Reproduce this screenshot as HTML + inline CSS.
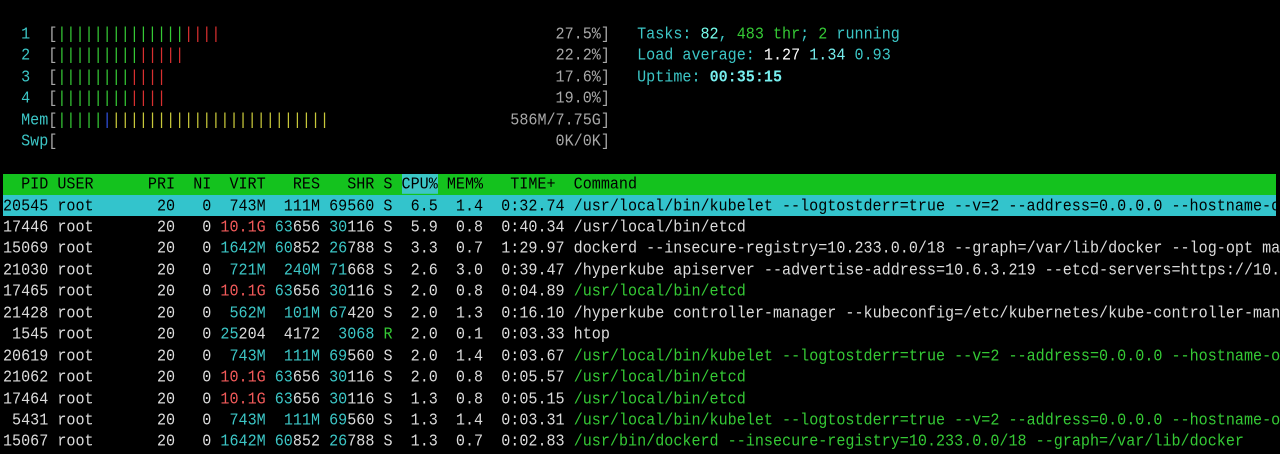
<!DOCTYPE html>
<html><head><meta charset="utf-8"><style>
html,body{margin:0;padding:0;background:#000;width:1280px;height:436px;overflow:hidden}
.l{position:absolute;left:3px;white-space:pre;font-family:"Liberation Mono",monospace;font-size:15.1px;line-height:21.45px;height:21.45px;color:#dcdcdc;transform:scaleY(1.1);transform-origin:0 50%}
.c{color:#3cc6c6}.g{color:#35c935}.r{color:#f25a5a}.y{color:#c8c83a}.b{color:#3050e0}.gr{color:#a8a8a8}.wb{color:#fff}.rd{color:#d83030}
.bar{position:absolute;left:3px;width:1273px;height:21px}
.hd{color:#000}
.sel,.sel span{color:#000}
.srt{background:#3cc6c6}
</style></head><body>
<div class="bar" style="top:174px;background:#14c21e"></div>
<div class="bar" style="top:195px;background:#33c4cc"></div>
<div class="l" style="top:23.8px"><span class="c">  1  </span><span class="gr">[</span><span class="g">||||||||||||||</span><span class="rd">||||</span>                                     <span class="gr">27.5%]</span>   <span class="c">Tasks: </span><span class="wb" style="color:#7fe">82</span><span class="c">, </span><span class="g">483</span><span class="g"> thr</span><span class="c">; </span><span class="g">2</span><span class="c"> running</span></div>
<div class="l" style="top:45.3px"><span class="c">  2  </span><span class="gr">[</span><span class="g">|||||||||</span><span class="rd">|||||</span>                                         <span class="gr">22.2%]</span>   <span class="c">Load average: </span><span class="wb">1.27 </span><span style="color:#7ee">1.34 </span><span class="c">0.93</span></div>
<div class="l" style="top:66.8px"><span class="c">  3  </span><span class="gr">[</span><span class="g">||||||||</span><span class="rd">||||</span>                                           <span class="gr">17.6%]</span>   <span class="c">Uptime: </span><span style="color:#7ee;font-weight:bold">00:35:15</span></div>
<div class="l" style="top:88.2px"><span class="c">  4  </span><span class="gr">[</span><span class="g">||||||||</span><span class="rd">||||</span>                                           <span class="gr">19.0%]</span></div>
<div class="l" style="top:109.6px"><span class="c">  Mem</span><span class="gr">[</span><span class="g">|||||</span><span class="b">|</span><span class="y">||||||||||||||||||||||||</span>                    <span class="gr">586M/7.75G]</span></div>
<div class="l" style="top:131.1px"><span class="c">  Swp</span><span class="gr">[</span>                                                       <span class="gr">0K/0K]</span></div>
<div class="l hd" style="top:174px">  PID USER      PRI  NI  VIRT   RES   SHR S <span class="srt">CPU%</span> MEM%   TIME+  Command</div>
<div class="l sel" style="top:195.5px">20545 root       20   0  743M  111M 69560 S  6.5  1.4  0:32.74 /usr/local/bin/kubelet --logtostderr=true --v=2 --address=0.0.0.0 --hostname-o</div>
<div class="l" style="top:216.9px">17446 root       20   0 <span class="r">10.1G</span> <span class="c">63</span>656 <span class="c">30</span>116 S  5.9  0.8  0:40.34 /usr/local/bin/etcd</div>
<div class="l" style="top:238.4px">15069 root       20   0 <span class="c">1642M</span> <span class="c">60</span>852 <span class="c">26</span>788 S  3.3  0.7  1:29.97 dockerd --insecure-registry=10.233.0.0/18 --graph=/var/lib/docker --log-opt ma</div>
<div class="l" style="top:259.8px">21030 root       20   0  <span class="c">721M</span>  <span class="c">240M</span> <span class="c">71</span>668 S  2.6  3.0  0:39.47 /hyperkube apiserver --advertise-address=10.6.3.219 --etcd-servers=https://10.</div>
<div class="l" style="top:281.3px">17465 root       20   0 <span class="r">10.1G</span> <span class="c">63</span>656 <span class="c">30</span>116 S  2.0  0.8  0:04.89 <span class="g">/usr/local/bin/etcd</span></div>
<div class="l" style="top:302.7px">21428 root       20   0  <span class="c">562M</span>  <span class="c">101M</span> <span class="c">67</span>420 S  2.0  1.3  0:16.10 /hyperkube controller-manager --kubeconfig=/etc/kubernetes/kube-controller-man</div>
<div class="l" style="top:324.2px"> 1545 root       20   0 <span class="c">25</span>204  4172  <span class="c">3068</span> <span class="g">R</span>  2.0  0.1  0:03.33 htop</div>
<div class="l" style="top:345.6px">20619 root       20   0  <span class="c">743M</span>  <span class="c">111M</span> <span class="c">69</span>560 S  2.0  1.4  0:03.67 <span class="g">/usr/local/bin/kubelet --logtostderr=true --v=2 --address=0.0.0.0 --hostname-o</span></div>
<div class="l" style="top:367.1px">21062 root       20   0 <span class="r">10.1G</span> <span class="c">63</span>656 <span class="c">30</span>116 S  2.0  0.8  0:05.57 <span class="g">/usr/local/bin/etcd</span></div>
<div class="l" style="top:388.5px">17464 root       20   0 <span class="r">10.1G</span> <span class="c">63</span>656 <span class="c">30</span>116 S  1.3  0.8  0:05.15 <span class="g">/usr/local/bin/etcd</span></div>
<div class="l" style="top:410px"> 5431 root       20   0  <span class="c">743M</span>  <span class="c">111M</span> <span class="c">69</span>560 S  1.3  1.4  0:03.31 <span class="g">/usr/local/bin/kubelet --logtostderr=true --v=2 --address=0.0.0.0 --hostname-o</span></div>
<div class="l" style="top:431.4px">15067 root       20   0 <span class="c">1642M</span> <span class="c">60</span>852 <span class="c">26</span>788 S  1.3  0.7  0:02.83 <span class="g">/usr/bin/dockerd --insecure-registry=10.233.0.0/18 --graph=/var/lib/docker</span></div>
</body></html>
